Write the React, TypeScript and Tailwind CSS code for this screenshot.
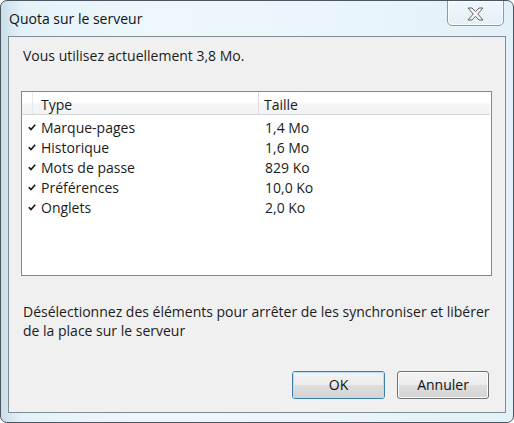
import React from "react";

const rows = [
  ["Marque-pages", "1,4 Mo"],
  ["Historique", "1,6 Mo"],
  ["Mots de passe", "829 Ko"],
  ["Préférences", "10,0 Ko"],
  ["Onglets", "2,0 Ko"],
];

function Check() {
  return (
    <svg width="8" height="7" viewBox="0 0 8 7" className="block">
      <path d="M0.8 3.2 L3 5.6 L7.2 0.8" fill="none" stroke="#1a1a1a" strokeWidth="1.7" />
    </svg>
  );
}

export default function App() {
  return (
    <div
      className="w-[514px] h-[423px] relative overflow-hidden rounded-[7px] border border-[#4a5560] bg-[linear-gradient(90deg,#c9dde8_0%,#e4f2f8_4%,#eef8fc_30%,#eaf6fb_60%,#e2f1f7_100%)] text-[#1b1b1b] text-[14px]"
      style={{ fontFamily: '"Open Sans", "Noto Sans", sans-serif' }}
    >
      <div className="h-[35px] flex items-center pl-[8px] pb-[1px] text-[#111]">
        Quota sur le serveur
      </div>
      <div className="absolute top-[-1px] right-[9px] w-[57px] h-[26px] rounded-b-[5px] border border-[#8d9aa6] bg-[linear-gradient(180deg,#eef7fb,#e4f1f7)] flex items-center justify-center shadow-[inset_0_0_0_1px_rgba(255,255,255,0.7)]">
        <svg width="17" height="14" viewBox="0 0 17 14" className="block mt-[1px]">
          <path
            d="M1 1 L5 1 L8.5 4.6 L12 1 L16 1 L10.8 7 L16 13 L12 13 L8.5 9.4 L5 13 L1 13 L6.2 7 Z"
            fill="#f4f4f4"
            stroke="#5e6369"
            strokeWidth="1"
            strokeLinejoin="round"
          />
        </svg>
      </div>
      <div className="mx-[7px] h-[377px] border border-[#7f8a93] bg-[#f0f0f0] flex flex-col">
        <div className="pl-[14px] pt-[9px] leading-[20px]">Vous utilisez actuellement 3,8 Mo.</div>
        <div className="ml-[12px] mr-[13px] mt-[25px] h-[185px] border border-[#828790] bg-white flex flex-col">
          <div className="h-[23px] flex border-b border-[#d5d5d5] bg-[linear-gradient(180deg,#ffffff_0%,#ffffff_45%,#f4f5f6_55%,#f2f3f4_100%)] mr-[1px]">
            <div className="w-[11px] border-r border-[#e8e8e8]" />
            <div className="w-[226px] border-r border-[#dcdcdc] pl-[8px] pt-[3px] leading-[20px]">Type</div>
            <div className="flex-1 pl-[5px] pt-[3px] leading-[20px]">Taille</div>
          </div>
          <div className="pt-[3px] flex flex-col">
            {rows.map(([t, s]) => (
              <div key={t} className="h-[20px] flex">
                <div className="w-[19px] pl-[6px] pt-[6px]">
                  <Check />
                </div>
                <div className="w-[224px] leading-[20px]">{t}</div>
                <div className="flex-1 leading-[20px]">{s}</div>
              </div>
            ))}
          </div>
        </div>
        <div className="pl-[14px] pr-[10px] mt-[26px] leading-[19px]">
          Désélectionnez des éléments pour arrêter de les synchroniser et libérer
          <br />
          de la place sur le serveur
        </div>
        <div className="flex-1" />
        <div className="flex justify-end gap-[12px] pr-[16px] pb-[13px]">
          <button className="w-[93px] h-[28px] rounded-[3px] border border-[#3c7fb1] bg-[linear-gradient(180deg,#eaf6fd_0%,#d9f0fc_48%,#bee6fd_52%,#a7d9f5_100%)] shadow-[inset_0_0_0_1px_#c6e6f7] text-[#111] leading-[26px]">
            <span className="block w-full h-full rounded-[2px] bg-[linear-gradient(180deg,#f3f3f3_0%,#ececec_48%,#dedede_52%,#d3d3d3_100%)] shadow-[inset_0_0_0_1px_#b8dcf0]">OK</span>
          </button>
          <button className="w-[92px] h-[28px] rounded-[3px] border border-[#707070] bg-[linear-gradient(180deg,#f3f3f3_0%,#ececec_48%,#dedede_52%,#d3d3d3_100%)] shadow-[inset_0_0_0_1px_#fcfcfc] text-[#111] leading-[26px]">
            Annuler
          </button>
        </div>
      </div>
    </div>
  );
}
